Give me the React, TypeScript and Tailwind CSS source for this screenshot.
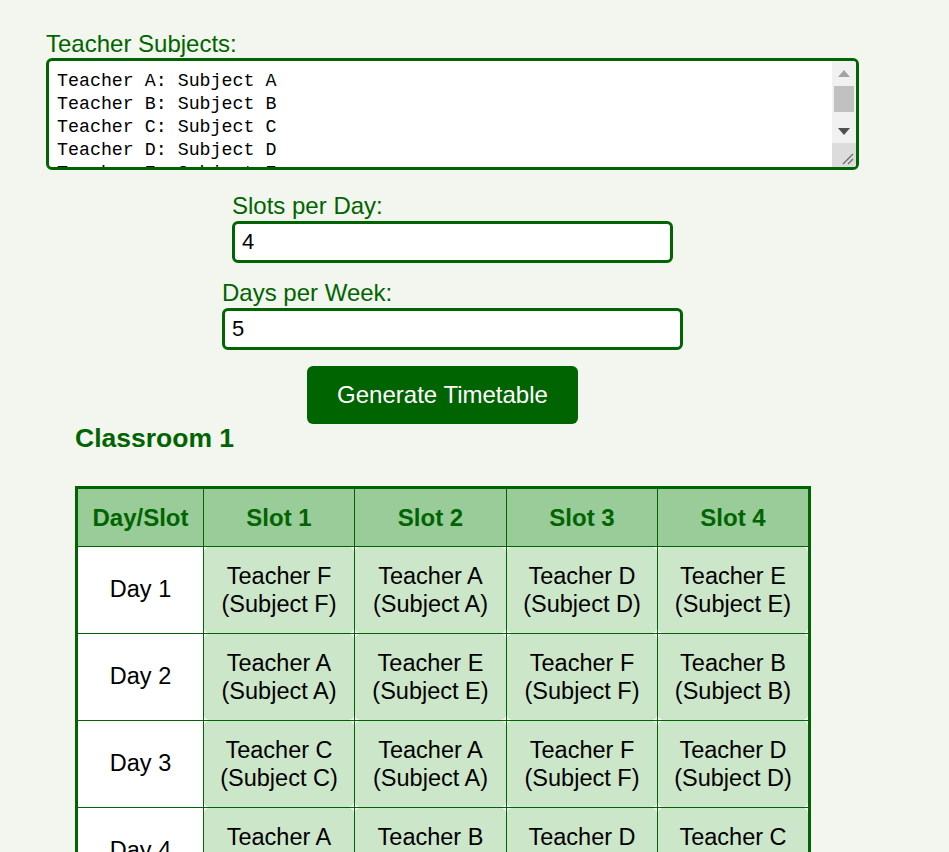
const teachers = ['A', 'B', 'C', 'D', 'E', 'F']

const schedule: string[][] = [
  ['F', 'A', 'D', 'E'],
  ['A', 'E', 'F', 'B'],
  ['C', 'A', 'F', 'D'],
  ['A', 'B', 'D', 'C'],
  ['E', 'C', 'B', 'F'],
]

// classic scrollbar drawn over the textarea (the browser hides its own)
function FakeScrollbar() {
  return (
    <div className="pointer-events-none absolute top-[3px] right-[3px] bottom-[3px] flex w-[24px] flex-col overflow-hidden rounded-r-[3px] bg-[#f1f1f1]">
      <div className="flex h-[24px] items-center justify-center">
        <svg width="12" height="7" viewBox="0 0 12 7">
          <path d="M6 0 L12 7 L0 7 Z" fill="#a3a3a3" />
        </svg>
      </div>
      <div className="mx-[2px] mt-px h-[26px] bg-[#c1c1c1]" />
      <div className="flex-1" />
      <div className="flex h-[24px] items-center justify-center">
        <svg width="12" height="7" viewBox="0 0 12 7">
          <path d="M0 0 L12 0 L6 7 Z" fill="#505050" />
        </svg>
      </div>
      <div className="relative h-[24px] bg-[#dcdcdc]">
        <svg className="absolute right-[2px] bottom-[2px]" width="12" height="12" viewBox="0 0 12 12">
          <path d="M1 11 L11 1 M6 11 L11 6" stroke="#6a6a6a" strokeWidth="1.3" />
        </svg>
      </div>
    </div>
  )
}

export default function App() {
  const subjectsText = teachers.map((t) => `Teacher ${t}: Subject ${t}`).join('\n')

  return (
    <div className="min-h-screen bg-[#f3f6ee] font-['Liberation_Sans',Arial,sans-serif]">
      <div className="ml-[46px] w-[813px] pt-[30px]">
        <label className="block text-[24px] leading-[27px] text-[#006400]">Teacher Subjects:</label>
        <div className="relative mt-px">
          <textarea
            defaultValue={subjectsText}
            className="block h-[112px] w-full resize-none overflow-hidden rounded-[6px] border-[3px] border-[#006400] bg-white pt-[9px] pr-[30px] pb-[5px] pl-2 font-['Liberation_Mono','DejaVu_Sans_Mono',monospace] text-[18.3px] leading-[23px] text-black outline-none"
          />
          <FakeScrollbar />
        </div>

        <div className="mt-[22px] flex flex-col items-center">
          <div className="w-[441px]">
            <label className="block text-[24px] leading-[27px] text-[#006400]">Slots per Day:</label>
            <input
              type="number"
              defaultValue={4}
              className="mt-[2px] block h-[42px] w-full rounded-[6px] border-[3px] border-[#006400] bg-white pl-[7px] text-[22px] text-black outline-none"
            />
          </div>
          <div className="mt-[16px] w-[461px]">
            <label className="block text-[24px] leading-[27px] text-[#006400]">Days per Week:</label>
            <input
              type="number"
              defaultValue={5}
              className="mt-[2px] block h-[42px] w-full rounded-[6px] border-[3px] border-[#006400] bg-white pl-[7px] text-[22px] text-black outline-none"
            />
          </div>
          <button className="mt-[16px] mr-5 h-[58px] w-[271px] rounded-[6px] bg-[#006400] text-[24px] text-white">
            Generate Timetable
          </button>
        </div>

        <div className="ml-[29px]">
          <h2 className="text-[26.5px] font-bold leading-[28px] text-[#006400]">Classroom 1</h2>
          <div className="mt-[34px] grid w-[736px] grid-cols-[125px_150px_151px_150px_150px] gap-px border-[3px] border-[#006400] bg-[#006400]">
            <div className="flex h-[57px] items-center justify-center bg-[#99cc99] text-[24px] font-bold text-[#006400]">
              Day/Slot
            </div>
            {[1, 2, 3, 4].map((s) => (
              <div
                key={s}
                className="flex h-[57px] items-center justify-center bg-[#99cc99] text-[24px] font-bold text-[#006400]"
              >
                Slot {s}
              </div>
            ))}
            {schedule.map((row, i) => (
              <Row key={i} day={i + 1} row={row} />
            ))}
          </div>
        </div>
      </div>
    </div>
  )
}

function Row({ day, row }: { day: number; row: string[] }) {
  return (
    <>
      <div className="flex h-[86px] items-center justify-center bg-white text-[23.5px] text-black">Day {day}</div>
      {row.map((t, j) => (
        <div key={j} className="h-[86px] bg-white">
          <div className="flex h-full flex-col items-center justify-center rounded-[5px] bg-[#cce6c9] text-center text-[23.5px] leading-[28px] text-black">
            <span>Teacher {t}</span>
            <span>(Subject {t})</span>
          </div>
        </div>
      ))}
    </>
  )
}
